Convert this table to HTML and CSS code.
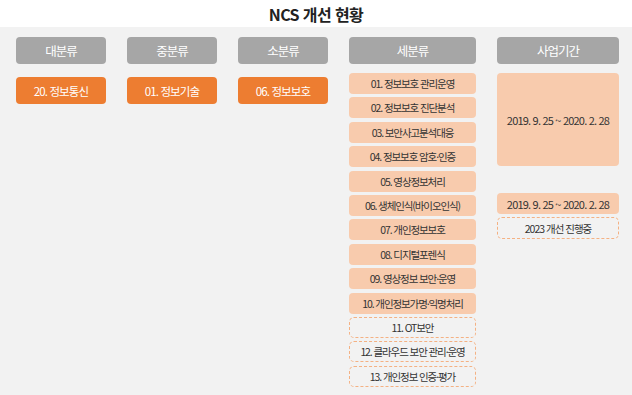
FILE: index.html
```html
<!DOCTYPE html>
<html lang="ko">
<head>
<meta charset="utf-8">
<title>NCS 개선 현황</title>
<link rel="stylesheet" href="styles.css">
</head>
<body>
<div class="page">
  <h1 class="title">NCS 개선 현황</h1>
  <div class="board">
    <div class="col col-a">
      <div class="head">대분류</div>
      <div class="main-box">20. 정보통신</div>
    </div>
    <div class="col col-a">
      <div class="head">중분류</div>
      <div class="main-box">01. 정보기술</div>
    </div>
    <div class="col col-a">
      <div class="head">소분류</div>
      <div class="main-box">06. 정보보호</div>
    </div>
    <div class="col col-b">
      <div class="head">세분류</div>
      <ul class="items">
        <li class="item">01. 정보보호 관리운영</li>
        <li class="item">02. 정보보호 진단분석</li>
        <li class="item">03. 보안사고분석대응</li>
        <li class="item">04. 정보보호 암호·인증</li>
        <li class="item">05. 영상정보처리</li>
        <li class="item">06. 생체인식(바이오인식)</li>
        <li class="item">07. 개인정보보호</li>
        <li class="item">08. 디지털포렌식</li>
        <li class="item">09. 영상정보 보안·운영</li>
        <li class="item">10. 개인정보가명·익명처리</li>
        <li class="item dashed">11. OT보안</li>
        <li class="item dashed">12. 클라우드 보안 관리·운영</li>
        <li class="item dashed">13. 개인정보 인증·평가</li>
      </ul>
    </div>
    <div class="col col-c">
      <div class="head">사업기간</div>
      <div class="period period-big">2019. 9. 25 ~ 2020. 2. 28</div>
      <div class="period period-small">2019. 9. 25 ~ 2020. 2. 28</div>
      <div class="period dashed">2023 개선 진행중</div>
    </div>
  </div>
</div>
</body>
</html>
```

FILE: styles.css
```css
* { box-sizing: border-box; }
html, body { margin: 0; padding: 0; }
body {
  width: 632px;
  height: 395px;
  overflow: hidden;
  background: #ffffff;
  font-family: "Noto Sans CJK KR", "Noto Sans", sans-serif;
  color: #333333;
}
.page { display: flex; flex-direction: column; height: 395px; }
.title {
  margin: 0;
  height: 27px;
  display: flex;
  align-items: center;
  justify-content: center;
  font-size: 16px;
  font-weight: 700;
  letter-spacing: -0.6px;
  color: #222222;
  padding-top: 1px;
}
.board {
  flex: 1;
  background: #f2f2f2;
  display: flex;
  align-items: flex-start;
  gap: 21px;
  padding: 10px 13px 0 16px;
}
.col { display: flex; flex-direction: column; }
.col-a { width: 90px; }
.col-b { width: 127px; }
.col-c { width: 122px; }
.head {
  height: 27px;
  border-radius: 4px;
  background: #a6a6a6;
  color: #ffffff;
  font-size: 12.5px;
  letter-spacing: -1px;
  display: flex;
  align-items: center;
  justify-content: center;
}
.main-box {
  margin-top: 13px;
  height: 27px;
  border-radius: 4px;
  background: #ed7d31;
  color: #ffffff;
  font-size: 11.5px;
  letter-spacing: -0.9px;
  display: flex;
  align-items: center;
  justify-content: center;
}
.items {
  list-style: none;
  margin: 9px 0 0 0;
  padding: 0;
  display: flex;
  flex-direction: column;
  gap: 3.4px;
}
.item, .period {
  height: 21px;
  border-radius: 4px;
  background: #f8cbad;
  color: #333333;
  font-size: 10.5px;
  letter-spacing: -1.1px;
  display: flex;
  align-items: center;
  justify-content: center;
  white-space: nowrap;
}
.dashed {
  background: transparent;
  border: 1px dashed #f4b183;
  border-radius: 5px;
}
.period { font-size: 11px; letter-spacing: -0.8px; }
.period-big { margin-top: 9px; height: 93px; }
.period-small { margin-top: 27px; }
.period.dashed { margin-top: 3px; height: 22px; font-size: 10.5px; letter-spacing: -1px; }
```
